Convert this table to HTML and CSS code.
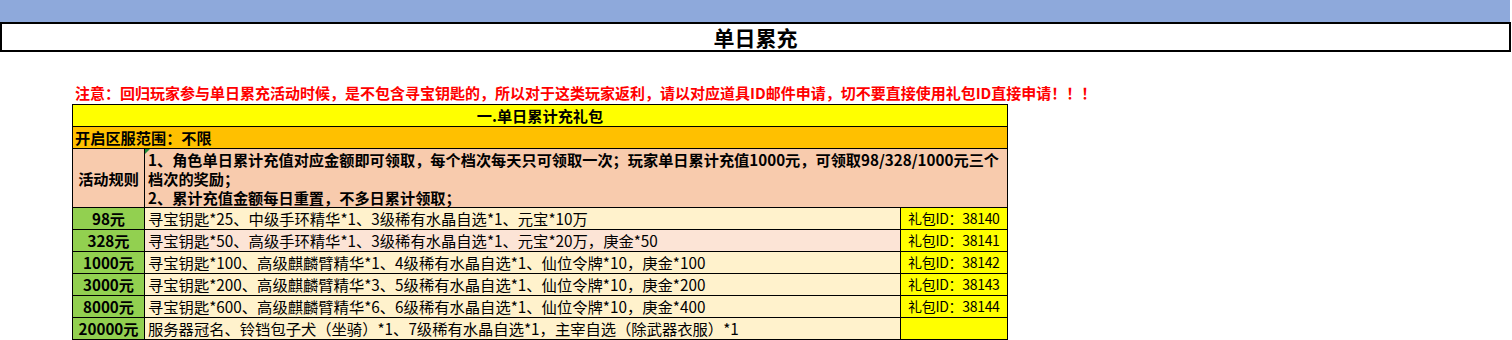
FILE: index.html
```html
<!DOCTYPE html>
<html lang="zh">
<head>
<meta charset="utf-8">
<title>单日累充</title>
<link rel="stylesheet" href="styles.css">
</head>
<body>
<div class="topbar"></div>
<div class="title">单日累充</div>
<div class="notice">注意：回归玩家参与单日累充活动时候，是不包含寻宝钥匙的，所以对于这类玩家返利，请以对应道具ID邮件申请，切不要直接使用礼包ID直接申请！！！</div>
<table class="sheet">
  <colgroup><col class="c1"><col class="c2"><col class="c3"></colgroup>
  <tr class="head"><td colspan="3">一.单日累计充礼包</td></tr>
  <tr class="range"><td colspan="3">开启区服范围：不限</td></tr>
  <tr class="rules">
    <td class="rule-label">活动规则</td>
    <td colspan="2" class="rule-text"><span class="tri"></span>1、角色单日累计充值对应金额即可领取，每个档次每天只可领取一次；玩家单日累计充值1000元，可领取98/328/1000元三个档次的奖励；<br>2、累计充值金额每日重置，不多日累计领取；</td>
  </tr>
  <tr><td class="amt">98元</td><td class="item">寻宝钥匙*25、中级手环精华*1、3级稀有水晶自选*1、元宝*10万</td><td class="gid">礼包ID：38140</td></tr>
  <tr><td class="amt">328元</td><td class="item pink">寻宝钥匙*50、高级手环精华*1、3级稀有水晶自选*1、元宝*20万，庚金*50</td><td class="gid">礼包ID：38141</td></tr>
  <tr><td class="amt">1000元</td><td class="item">寻宝钥匙*100、高级麒麟臂精华*1、4级稀有水晶自选*1、仙位令牌*10，庚金*100</td><td class="gid">礼包ID：38142</td></tr>
  <tr><td class="amt">3000元</td><td class="item">寻宝钥匙*200、高级麒麟臂精华*3、5级稀有水晶自选*1、仙位令牌*10，庚金*200</td><td class="gid">礼包ID：38143</td></tr>
  <tr><td class="amt">8000元</td><td class="item">寻宝钥匙*600、高级麒麟臂精华*6、6级稀有水晶自选*1、仙位令牌*10，庚金*400</td><td class="gid">礼包ID：38144</td></tr>
  <tr><td class="amt">20000元</td><td class="item">服务器冠名、铃铛包子犬（坐骑）*1、7级稀有水晶自选*1，主宰自选（除武器衣服）*1</td><td class="gid"></td></tr>
</table>
</body>
</html>
```
FILE: styles.css
```css
html, body {
  margin: 0;
  padding: 0;
  background: #fff;
  font-family: "Noto Sans CJK SC", "Noto Sans", sans-serif;
  color: #000;
}
.topbar {
  height: 22px;
  width: 1510px;
  background: #8ea9db;
}
.title {
  width: 1507px;
  height: 26px;
  border: 2px solid #000;
  text-align: center;
  font-size: 21px;
  font-weight: bold;
  line-height: 26px;
}
.notice {
  margin: 30px 0 0 75px;
  color: #ff0000;
  font-size: 15px;
  font-weight: bold;
  line-height: 22px;
  height: 22px;
  white-space: nowrap;
}
.sheet {
  margin-left: 72px;
  border-collapse: collapse;
  table-layout: fixed;
  width: 935px;
  font-size: 15.2px;
}
.c1 { width: 72px; }
.c2 { width: 756px; }
.c3 { width: 107px; }
.sheet tr {
  height: 22px;
}
.sheet tr.rules {
  height: 59px;
}
.sheet td {
  border: 1px solid #000;
  padding: 0 3px;
  line-height: 19px;
  white-space: nowrap;
  overflow: hidden;
}
.head td {
  background: #ffff00;
  text-align: center;
  font-weight: bold;
}
.range td {
  background: #ffc000;
  font-weight: bold;
  padding-left: 2px;
}
.rules td {
  background: #f8cbad;
  font-weight: bold;
}
.rule-label {
  text-align: center;
}
.sheet td.rule-text {
  white-space: normal;
  line-height: 19px;
  padding: 1px 3px 0 3px;
  position: relative;
}
.tri {
  position: absolute;
  left: 0;
  top: 0;
  width: 0;
  height: 0;
  border-top: 5px solid #1e8c3a;
  border-right: 5px solid transparent;
}
.amt {
  background: #92d050;
  font-weight: bold;
  text-align: center;
}
.item {
  background: #fff2cc;
  font-size: 15.3px;
}
.item.pink {
  background: #fce4d6;
}
.sheet td.gid {
  background: #ffff00;
  padding-left: 7px;
  font-size: 14px;
  letter-spacing: -0.3px;
}
```
